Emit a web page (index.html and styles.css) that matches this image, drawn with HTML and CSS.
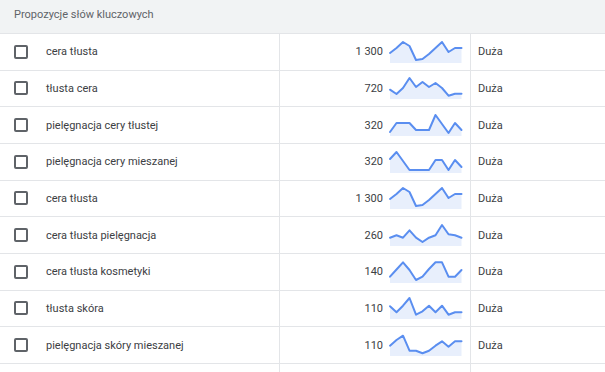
FILE: index.html
```html
<!DOCTYPE html>
<html lang="pl">
<head>
<meta charset="utf-8">
<title>Propozycje słów kluczowych</title>
<link rel="stylesheet" href="styles.css">
</head>
<body>
<div class="table">
  <div class="header">Propozycje słów kluczowych</div>

  <div class="row">
    <div class="cell kw"><span class="cb"></span><span>cera tłusta</span></div>
    <div class="cell vol"><span>1 300</span>
      <svg class="spark" viewBox="0 0 72 22"><polygon class="area" points="0,12 6.5,7 13,1 19.5,5 26,19 32.5,18 39,13 45.5,7 52,1 58.5,11 65,7 71.5,7 71.5,22 0,22"/><polyline class="line" points="0,12 6.5,7 13,1 19.5,5 26,19 32.5,18 39,13 45.5,7 52,1 58.5,11 65,7 71.5,7"/></svg>
    </div>
    <div class="cell comp">Duża</div>
  </div>

  <div class="row">
    <div class="cell kw"><span class="cb"></span><span>tłusta cera</span></div>
    <div class="cell vol"><span>720</span>
      <svg class="spark" viewBox="0 0 72 22"><polygon class="area" points="0,12.7 6.5,17 13,11 19.5,1 26,10 32.5,5 39,10 45.5,6 52,11 58.5,18.7 65,16.7 71.5,16.7 71.5,22 0,22"/><polyline class="line" points="0,12.7 6.5,17 13,11 19.5,1 26,10 32.5,5 39,10 45.5,6 52,11 58.5,18.7 65,16.7 71.5,16.7"/></svg>
    </div>
    <div class="cell comp">Duża</div>
  </div>

  <div class="row">
    <div class="cell kw"><span class="cb"></span><span>pielęgnacja cery tłustej</span></div>
    <div class="cell vol"><span>320</span>
      <svg class="spark" viewBox="0 0 72 22"><polygon class="area" points="0,18 6.5,9 13,9 19.5,9 26,16 32.5,16 39,16 45.5,1 52,10 58.5,19 65,9 71.5,16 71.5,22 0,22"/><polyline class="line" points="0,18 6.5,9 13,9 19.5,9 26,16 32.5,16 39,16 45.5,1 52,10 58.5,19 65,9 71.5,16"/></svg>
    </div>
    <div class="cell comp">Duża</div>
  </div>

  <div class="row">
    <div class="cell kw"><span class="cb"></span><span>pielęgnacja cery mieszanej</span></div>
    <div class="cell vol"><span>320</span>
      <svg class="spark" viewBox="0 0 72 22"><polygon class="area" points="0,8 6.5,1 13,10 19.5,19 26,19 32.5,19 39,19 45.5,9 52,9 58.5,19 65,9 71.5,16 71.5,22 0,22"/><polyline class="line" points="0,8 6.5,1 13,10 19.5,19 26,19 32.5,19 39,19 45.5,9 52,9 58.5,19 65,9 71.5,16"/></svg>
    </div>
    <div class="cell comp">Duża</div>
  </div>

  <div class="row">
    <div class="cell kw"><span class="cb"></span><span>cera tłusta</span></div>
    <div class="cell vol"><span>1 300</span>
      <svg class="spark" viewBox="0 0 72 22"><polygon class="area" points="0,12 6.5,7 13,1 19.5,5 26,19 32.5,18 39,13 45.5,7 52,1 58.5,11 65,7 71.5,7 71.5,22 0,22"/><polyline class="line" points="0,12 6.5,7 13,1 19.5,5 26,19 32.5,18 39,13 45.5,7 52,1 58.5,11 65,7 71.5,7"/></svg>
    </div>
    <div class="cell comp">Duża</div>
  </div>

  <div class="row">
    <div class="cell kw"><span class="cb"></span><span>cera tłusta pielęgnacja</span></div>
    <div class="cell vol"><span>260</span>
      <svg class="spark" viewBox="0 0 72 22"><polygon class="area" points="0,13.7 6.5,11.3 13,13.7 19.5,6.3 26,13.7 32.5,18 39,13.7 45.5,11.3 52,1 58.5,10.3 65,11.3 71.5,13.7 71.5,22 0,22"/><polyline class="line" points="0,13.7 6.5,11.3 13,13.7 19.5,6.3 26,13.7 32.5,18 39,13.7 45.5,11.3 52,1 58.5,10.3 65,11.3 71.5,13.7"/></svg>
    </div>
    <div class="cell comp">Duża</div>
  </div>

  <div class="row">
    <div class="cell kw"><span class="cb"></span><span>cera tłusta kosmetyki</span></div>
    <div class="cell vol"><span>140</span>
      <svg class="spark" viewBox="0 0 72 22"><polygon class="area" points="0,15.7 6.5,8.5 13,1.3 19.5,9 26,19 32.5,15.7 39,8 45.5,1.3 52,1.3 58.5,15.7 65,15.7 71.5,9 71.5,22 0,22"/><polyline class="line" points="0,15.7 6.5,8.5 13,1.3 19.5,9 26,19 32.5,15.7 39,8 45.5,1.3 52,1.3 58.5,15.7 65,15.7 71.5,9"/></svg>
    </div>
    <div class="cell comp">Duża</div>
  </div>

  <div class="row">
    <div class="cell kw"><span class="cb"></span><span>tłusta skóra</span></div>
    <div class="cell vol"><span>110</span>
      <svg class="spark" viewBox="0 0 72 22"><polygon class="area" points="0,9.3 6.5,15.3 13,8.7 19.5,1 26,17.7 32.5,14.3 39,8.7 45.5,15.3 52,8.7 58.5,17.7 65,15.3 71.5,15.3 71.5,22 0,22"/><polyline class="line" points="0,9.3 6.5,15.3 13,8.7 19.5,1 26,17.7 32.5,14.3 39,8.7 45.5,15.3 52,8.7 58.5,17.7 65,15.3 71.5,15.3"/></svg>
    </div>
    <div class="cell comp">Duża</div>
  </div>

  <div class="row">
    <div class="cell kw"><span class="cb"></span><span>pielęgnacja skóry mieszanej</span></div>
    <div class="cell vol"><span>110</span>
      <svg class="spark" viewBox="0 0 72 22"><polygon class="area" points="0,11.7 6.5,6 13,1.7 19.5,16.7 26,16.7 32.5,19.3 39,16.7 45.5,11.7 52,7.3 58.5,12.7 65,7.3 71.5,7.3 71.5,22 0,22"/><polyline class="line" points="0,11.7 6.5,6 13,1.7 19.5,16.7 26,16.7 32.5,19.3 39,16.7 45.5,11.7 52,7.3 58.5,12.7 65,7.3 71.5,7.3"/></svg>
    </div>
    <div class="cell comp">Duża</div>
  </div>

  <div class="row row-empty">
    <div class="cell"></div>
    <div class="cell vol"></div>
    <div class="cell comp"></div>
  </div>
</div>
</body>
</html>
```
FILE: styles.css
```css
html, body {
  margin: 0;
  padding: 0;
  background: #ffffff;
}

body {
  font-family: Roboto, "Liberation Sans", Arial, sans-serif;
  font-size: 11px;
  color: #3c4043;
  overflow: hidden;
}

.table {
  width: 605px;
}

.header {
  height: 34px;
  box-sizing: border-box;
  padding: 8px 0 0 14px;
  line-height: 14px;
  background: #f1f3f4;
  color: #5f6368;
  border-bottom: 1px solid #e3e5e8;
}

.row {
  display: grid;
  grid-template-columns: 279px 191px 1fr;
  height: 36.67px;
  box-sizing: border-box;
  border-bottom: 1px solid #e3e5e8;
}

.row-empty {
  height: 20px;
  border-bottom: none;
}

.cell {
  display: flex;
  align-items: center;
  min-width: 0;
}

.kw {
  padding-left: 14px;
  gap: 18px;
}

.cb {
  width: 14px;
  height: 14px;
  box-sizing: border-box;
  border: 2px solid #5f6368;
  border-radius: 2px;
  flex: none;
}

.vol {
  border-left: 1px solid #e3e5e8;
  justify-content: flex-end;
  padding-right: 8px;
  gap: 7px;
}

.spark {
  width: 72px;
  height: 22px;
  flex: none;
  overflow: visible;
}

.spark .area {
  fill: #e8effc;
  stroke: none;
}

.spark .line {
  fill: none;
  stroke: #5a8ef0;
  stroke-width: 2;
  stroke-linejoin: round;
  stroke-linecap: round;
}

.comp {
  border-left: 1px solid #e3e5e8;
  padding-left: 7px;
}
```
